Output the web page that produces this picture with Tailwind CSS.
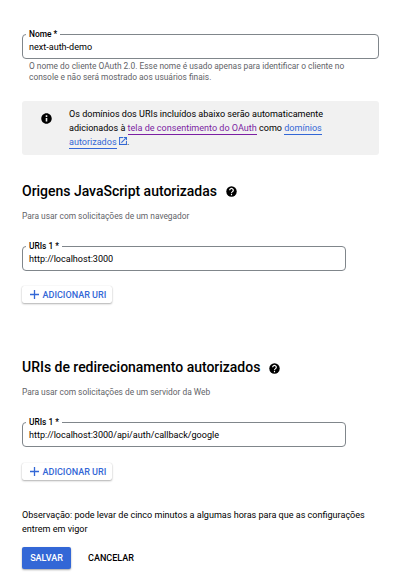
<!DOCTYPE html>
<html lang="pt-BR">
<head>
<meta charset="utf-8">
<title>Cliente OAuth</title>
<script src="https://cdn.jsdelivr.net/npm/@tailwindcss/browser@4"></script>
</head>
<body class="bg-white">
<main class="w-[404px] h-[578px] overflow-hidden pl-[22px] pr-[25px] pt-[34px] font-[Roboto,sans-serif] text-[9.06px] leading-[14px] text-[#202124]">
  <div class="relative h-[25px] rounded-[4px] border border-[#80868b] px-[6px] flex items-center">
    <label class="absolute left-[3px] -top-[7px] bg-white px-[3px] text-[8.4px] leading-[12px] font-medium text-black">Nome *</label>
    <span class="whitespace-nowrap text-black">next-auth-demo</span>
  </div>
  <p class="mt-[2px] pl-[7px] text-[8.4px] leading-[11px] text-[#5f6368] whitespace-nowrap">O nome do cliente OAuth 2.0. Esse nome é usado apenas para identificar o cliente no<br>console e não será mostrado aos usuários finais.</p>

  <div class="mt-[18px] h-[54px] rounded-[3px] bg-[#f1f1f1] flex pl-[19px] pt-[6px]">
    <svg class="mt-[6px] w-[11px] h-[11px] shrink-0" viewBox="1.5 1.5 21 21"><path d="M12 2C6.480 2 2 6.480 2 12s4.480 10 10 10 10-4.480 10-10S17.520 2 12 2zm1.500 15.500h-3V11h3v6.500zm0-8.500h-3V6h3v3z"/></svg>
    <p class="ml-[17px] whitespace-nowrap text-black">Os domínios dos URIs incluídos abaixo serão automaticamente<br>adicionados à <a class="border-b border-[#7b1fa2] text-[#7b1fa2] pb-px">tela de consentimento do OAuth</a> como <a class="border-b border-[#3367d6] text-[#3367d6] pb-px">domínios</a><br><a class="border-b border-[#3367d6] text-[#3367d6] pb-px">autorizados</a><svg class="inline-block ml-[2px] mr-[0.5px] -mt-[3px] w-[8px] h-[8px]" viewBox="3 3 18 18" fill="#3367d6" stroke="#3367d6" stroke-width="0.4"><path d="M19 19H5V5h7V3H3v18h18v-9h-2v7zM14 3v2h3.590l-9.830 9.830 1.410 1.410L19 6.410V10h2V3h-7z"/></svg>.</p>
  </div>

  <h2 class="mt-[26px] flex items-center text-[14px] leading-[20px] tracking-[-0.02px] font-medium text-black whitespace-nowrap">Origens JavaScript autorizadas
    <svg class="ml-[9px] w-[11px] h-[11px]" viewBox="1.5 1.5 21 21"><circle cx="12" cy="12" r="10"/><path d="M8.500 9.500a3.500 3.300 0 1 1 5.500 2.700c-1.400 1-2 1.400-2 2.800M12 16.500v2.500" fill="none" stroke="#fff" stroke-width="2.200"/></svg>
  </h2>
  <p class="mt-[9px] text-[8.4px] leading-[12px] text-[#5f6368] whitespace-nowrap">Para usar com solicitações de um navegador</p>
  <div class="relative mt-[24px] w-[324px] h-[25px] rounded-[4px] border border-[#80868b] px-[6px] flex items-center">
    <label class="absolute left-[3px] -top-[7px] bg-white px-[3px] text-[8.4px] leading-[12px] font-medium text-black">URIs 1 *</label>
    <span class="whitespace-nowrap text-black">http://localhost:3000</span>
  </div>
  <button class="mt-[15px] w-[90px] h-[17px] rounded-[2px] bg-white shadow-[0_1px_2px_rgba(0,0,0,0.3),0_0_1px_rgba(0,0,0,0.15)] flex items-center pl-[8px] text-[9.06px] font-medium text-[#3367d6] whitespace-nowrap">
    <svg class="mr-[3.5px] w-[9px] h-[9px] shrink-0" viewBox="0 0 9 9" fill="none" stroke="#3367d6" stroke-width="1.3"><path d="M4.500 0v9M0 4.500h9"/></svg>ADICIONAR URI</button>

  <h2 class="mt-[54px] flex items-center text-[14px] leading-[20px] tracking-[-0.02px] font-medium text-black whitespace-nowrap">URIs de redirecionamento autorizados
    <svg class="ml-[9px] mt-[2px] w-[11px] h-[11px]" viewBox="1.5 1.5 21 21"><circle cx="12" cy="12" r="10"/><path d="M8.500 9.500a3.500 3.300 0 1 1 5.500 2.700c-1.400 1-2 1.400-2 2.800M12 16.500v2.500" fill="none" stroke="#fff" stroke-width="2.200"/></svg>
  </h2>
  <p class="mt-[9px] text-[8.4px] leading-[12px] text-[#5f6368] whitespace-nowrap">Para usar com solicitações de um servidor da Web</p>
  <div class="relative mt-[24px] w-[324px] h-[25px] rounded-[4px] border border-[#80868b] px-[6px] flex items-center">
    <label class="absolute left-[3px] -top-[7px] bg-white px-[3px] text-[8.4px] leading-[12px] font-medium text-black">URIs 1 *</label>
    <span class="whitespace-nowrap text-black">http://localhost:3000/api/auth/callback/google</span>
  </div>
  <button class="mt-[16px] w-[90px] h-[17px] rounded-[2px] bg-white shadow-[0_1px_2px_rgba(0,0,0,0.3),0_0_1px_rgba(0,0,0,0.15)] flex items-center pl-[8px] text-[9.06px] font-medium text-[#3367d6] whitespace-nowrap">
    <svg class="mr-[3.5px] w-[9px] h-[9px] shrink-0" viewBox="0 0 9 9" fill="none" stroke="#3367d6" stroke-width="1.3"><path d="M4.500 0v9M0 4.500h9"/></svg>ADICIONAR URI</button>

  <p class="mt-[28px] whitespace-nowrap text-black">Observação: pode levar de cinco minutos a algumas horas para que as configurações<br>entrem em vigor</p>
  <div class="mt-[11px] flex items-center">
    <button class="w-[49px] h-[22px] rounded-[2px] bg-[#3367d6] shadow-[0_1px_2px_rgba(0,0,0,0.35)] text-[9.06px] font-medium text-white">SALVAR</button>
    <button class="ml-[17px] text-[9.06px] font-medium text-black">CANCELAR</button>
  </div>
</main>
</body>
</html>
